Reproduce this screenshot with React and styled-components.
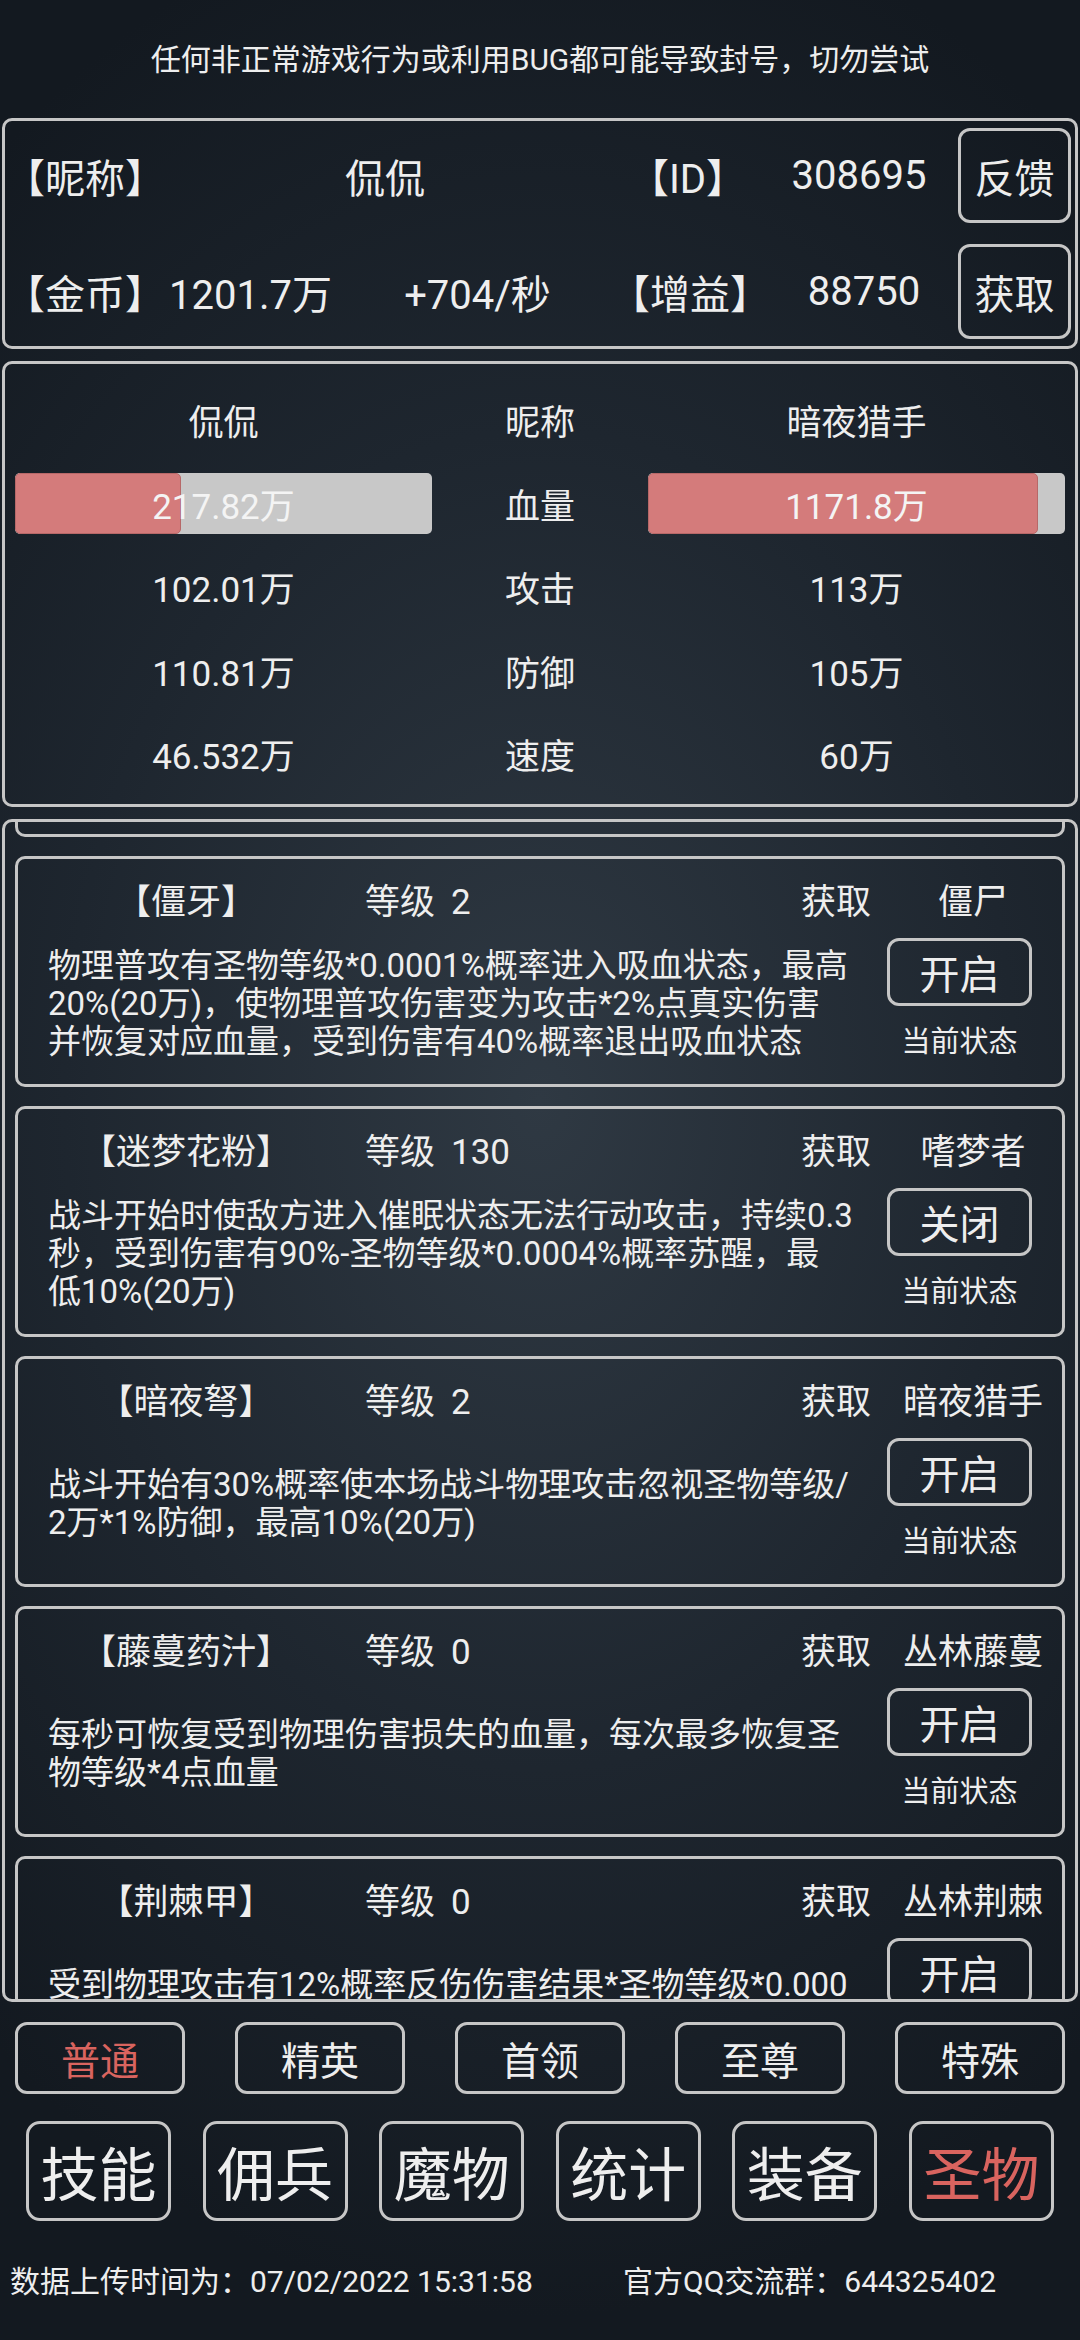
import { useLayoutEffect, useRef } from 'react';
import styled, { createGlobalStyle } from 'styled-components';

const GlobalStyle = createGlobalStyle`
	html, body {
		margin: 0;
		padding: 0;
		background: #131920;
	}
	body {
		font-family: Roboto, "Noto Sans CJK SC", sans-serif;
		color: #eeeeee;
	}
`;

const BORDER = '#c6c6c6';
const RED = '#d9645f';

const Page = styled.div`
	width: 1080px;
	height: 2340px;
	overflow: hidden;
	display: flex;
	flex-direction: column;
	background: radial-gradient(ellipse 80% 52% at 50% 47%, #2f3943 0%, #1e262f 55%, #131920 100%);
`;

const Notice = styled.div`
	height: 118px;
	box-sizing: border-box;
	padding-top: 40px;
	line-height: 40px;
	font-size: 30px;
	text-align: center;
`;

const Panel = styled.div`
	margin: 0 2px;
	border: 3px solid ${BORDER};
	border-radius: 10px;
	box-sizing: border-box;
`;

const InfoPanel = styled(Panel)`
	height: 231px;
	padding: 7px 4px 0 0;
	display: flex;
	flex-direction: column;
	gap: 21px;
`;

const InfoRow = styled.div`
	display: grid;
	grid-template-columns: ${({ $cols }) => $cols};
	align-items: center;
	height: 95px;
	font-size: 40px;
`;

const Cell = styled.div`
	text-align: ${({ $align }) => $align || 'center'};
	padding-left: ${({ $pad }) => $pad || 0}px;
	white-space: nowrap;
`;

const SideButton = styled.div`
	height: 95px;
	box-sizing: border-box;
	border: 3px solid ${BORDER};
	border-radius: 12px;
	display: flex;
	align-items: center;
	justify-content: center;
`;

const StatsPanel = styled(Panel)`
	margin-top: 12px;
	height: 446px;
	padding: 14px 10px 0;
	display: grid;
	grid-template-columns: 417px 1fr 417px;
	grid-auto-rows: 83.5px;
	align-items: center;
	text-align: center;
	font-size: 35px;
`;

const HpBar = styled.div`
	display: grid;
	height: 61px;
	background: #c8c8c8;
	border-radius: 5px;
	overflow: hidden;
`;

const HpFill = styled.div`
	grid-area: 1 / 1;
	justify-self: start;
	height: 100%;
	box-sizing: border-box;
	background: #d47b7b;
	border: 1px solid #b76868;
	border-radius: 5px;
`;

const HpText = styled.div`
	grid-area: 1 / 1;
	align-self: center;
	color: #f4f4f4;
`;

const RelicList = styled(Panel)`
	margin-top: 12px;
	height: 1183px;
	padding: 12px 10px;
	overflow-y: auto;
	scrollbar-width: none;
	display: flex;
	flex-direction: column;
	gap: 19px;

	&::-webkit-scrollbar {
		display: none;
	}
`;

const Card = styled.div`
	flex-shrink: 0;
	height: 231px;
	box-sizing: border-box;
	border: 3px solid ${BORDER};
	border-radius: 10px;
	padding-bottom: 14px;
`;

const CardHeader = styled.div`
	height: 79px;
	display: grid;
	grid-template-columns: 336px 1fr 96px 178px;
	align-items: center;
	font-size: 35px;
	white-space: nowrap;
`;

const LevelNumber = styled.span`
	margin-left: 16px;
`;

const CardBody = styled.div`
	display: flex;
	height: 132px;
`;

const Desc = styled.div`
	flex: 1;
	align-self: center;
	padding-left: 30px;
	font-size: 33px;
	line-height: 38px;
`;

const DescLine = styled.div`
	white-space: nowrap;
`;

const StateColumn = styled.div`
	width: 145px;
	margin-right: 30px;
	display: flex;
	flex-direction: column;
	align-items: center;
`;

const Toggle = styled.div`
	width: 145px;
	height: 68px;
	box-sizing: border-box;
	border: 3px solid ${BORDER};
	border-radius: 12px;
	display: flex;
	align-items: center;
	justify-content: center;
	font-size: 40px;
`;

const StateLabel = styled.div`
	margin-top: 18px;
	font-size: 29px;
	line-height: 36px;
`;

const TabRow = styled.div`
	margin-top: 20px;
	padding: 0 15px;
	display: flex;
	justify-content: space-between;
`;

const Tab = styled.div`
	width: 170px;
	height: 72px;
	box-sizing: border-box;
	border: 3px solid ${BORDER};
	border-radius: 12px;
	display: flex;
	align-items: center;
	justify-content: center;
	font-size: 39px;
	color: ${({ $active }) => ($active ? RED : '#eeeeee')};
`;

const NavRow = styled.div`
	margin-top: 27px;
	padding: 0 26px;
	display: flex;
	justify-content: space-between;
`;

const NavButton = styled.div`
	width: 145px;
	height: 100px;
	box-sizing: border-box;
	border: 3px solid ${BORDER};
	border-radius: 14px;
	display: flex;
	align-items: center;
	justify-content: center;
	font-size: 58px;
	color: ${({ $active }) => ($active ? RED : '#eeeeee')};
`;

const Footer = styled.div`
	margin-top: 40px;
	padding-left: 10px;
	display: grid;
	grid-template-columns: 613px 1fr;
	font-size: 30px;
	line-height: 42px;
	white-space: nowrap;
`;

const stats = [
	{ label: '攻击', me: '102.01万', foe: '113万' },
	{ label: '防御', me: '110.81万', foe: '105万' },
	{ label: '速度', me: '46.532万', foe: '60万' },
];

const relics = [
	{
		name: '【尸毒】',
		level: 5,
		source: '僵尸',
		state: '开启',
		lines: ['物理普攻有圣物等级*0.0001%概率使敌人中毒，', '每秒损失攻击*1%点血量'],
	},
	{
		name: '【僵牙】',
		level: 2,
		source: '僵尸',
		state: '开启',
		lines: [
			'物理普攻有圣物等级*0.0001%概率进入吸血状态，最高',
			'20%(20万)，使物理普攻伤害变为攻击*2%点真实伤害',
			'并恢复对应血量，受到伤害有40%概率退出吸血状态',
		],
	},
	{
		name: '【迷梦花粉】',
		level: 130,
		source: '嗜梦者',
		state: '关闭',
		lines: [
			'战斗开始时使敌方进入催眠状态无法行动攻击，持续0.3',
			'秒，受到伤害有90%-圣物等级*0.0004%概率苏醒，最',
			'低10%(20万)',
		],
	},
	{
		name: '【暗夜弩】',
		level: 2,
		source: '暗夜猎手',
		state: '开启',
		lines: ['战斗开始有30%概率使本场战斗物理攻击忽视圣物等级/', '2万*1%防御，最高10%(20万)'],
	},
	{
		name: '【藤蔓药汁】',
		level: 0,
		source: '丛林藤蔓',
		state: '开启',
		lines: ['每秒可恢复受到物理伤害损失的血量，每次最多恢复圣', '物等级*4点血量'],
	},
	{
		name: '【荆棘甲】',
		level: 0,
		source: '丛林荆棘',
		state: '开启',
		lines: ['受到物理攻击有12%概率反伤伤害结果*圣物等级*0.000', '1%，最高10%(20万)'],
	},
];

const tabs = ['普通', '精英', '首领', '至尊', '特殊'];
const navs = ['技能', '佣兵', '魔物', '统计', '装备', '圣物'];

const RelicCard = ({ name, level, source, state, lines }) => (
	<Card>
		<CardHeader>
			<Cell>{name}</Cell>
			<Cell $align="left" $pad={11}>
				等级<LevelNumber>{level}</LevelNumber>
			</Cell>
			<Cell>获取</Cell>
			<Cell>{source}</Cell>
		</CardHeader>
		<CardBody>
			<Desc>
				{lines.map((line) => (
					<DescLine key={line}>{line}</DescLine>
				))}
			</Desc>
			<StateColumn>
				<Toggle>{state}</Toggle>
				<StateLabel>当前状态</StateLabel>
			</StateColumn>
		</CardBody>
	</Card>
);

const StatRow = ({ label, me, foe }) => (
	<>
		<div>{me}</div>
		<div>{label}</div>
		<div>{foe}</div>
	</>
);

export default function App() {
	const listRef = useRef(null);

	// the relic list is scrolled a bit past its first card
	useLayoutEffect(() => {
		if (listRef.current) listRef.current.scrollTop = 228;
	}, []);

	return (
		<Page>
			<GlobalStyle />
			<Notice>任何非正常游戏行为或利用BUG都可能导致封号，切勿尝试</Notice>

			<InfoPanel>
				<InfoRow $cols="150px 460px 145px 1fr 113px">
					<Cell>【昵称】</Cell>
					<Cell>侃侃</Cell>
					<Cell>【ID】</Cell>
					<Cell>308695</Cell>
					<SideButton>反馈</SideButton>
				</InfoRow>
				<InfoRow $cols="150px 190px 265px 160px 1fr 113px">
					<Cell>【金币】</Cell>
					<Cell $align="left" $pad={14}>
						1201.7万
					</Cell>
					<Cell>+704/秒</Cell>
					<Cell>【增益】</Cell>
					<Cell>88750</Cell>
					<SideButton>获取</SideButton>
				</InfoRow>
			</InfoPanel>

			<StatsPanel>
				<div>侃侃</div>
				<div>昵称</div>
				<div>暗夜猎手</div>

				<HpBar>
					<HpFill style={{ width: '39.7%' }} />
					<HpText>217.82万</HpText>
				</HpBar>
				<div>血量</div>
				<HpBar>
					<HpFill style={{ width: '93.5%' }} />
					<HpText>1171.8万</HpText>
				</HpBar>

				{stats.map(({ label, me, foe }) => (
					<StatRow key={label} label={label} me={me} foe={foe} />
				))}
			</StatsPanel>

			<RelicList ref={listRef}>
				{relics.map((relic) => (
					<RelicCard key={relic.name} {...relic} />
				))}
			</RelicList>

			<TabRow>
				{tabs.map((tab, i) => (
					<Tab key={tab} $active={i === 0}>
						{tab}
					</Tab>
				))}
			</TabRow>

			<NavRow>
				{navs.map((nav) => (
					<NavButton key={nav} $active={nav === '圣物'}>
						{nav}
					</NavButton>
				))}
			</NavRow>

			<Footer>
				<div>数据上传时间为：07/02/2022 15:31:58</div>
				<div>官方QQ交流群：644325402</div>
			</Footer>
		</Page>
	);
}
